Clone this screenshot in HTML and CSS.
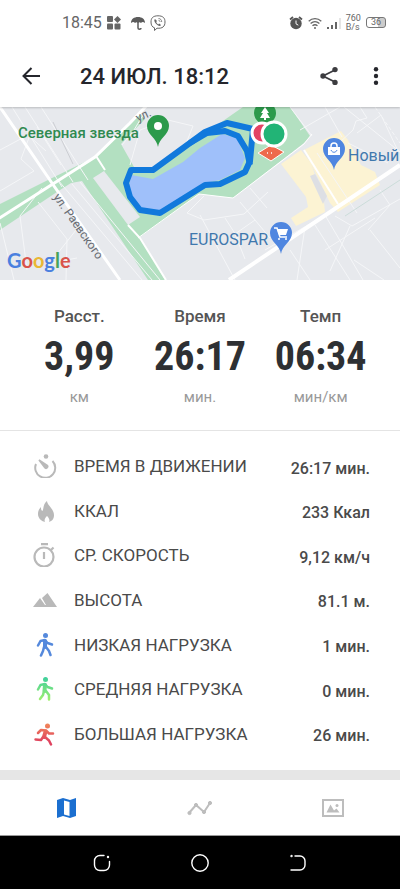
FILE: index.html
```html
<!DOCTYPE html>
<html lang="ru">
<head>
    <meta charset="UTF-8">
    <meta name="viewport" content="width=device-width, initial-scale=1.0">
    <title>Тренировка</title>
    <link rel="stylesheet" href="styles.css">
</head>
<body>
    <div class="status-bar">
        <div class="status-left">
            <span class="clock">18:45</span>
            <svg class="status-icon" viewBox="0 0 14 14" fill="#666">
                <rect x="0" y="0" width="6" height="6" rx="1"/>
                <path d="M10.500 0L14 3.500 10.500 7 7 3.500z"/>
                <rect x="0" y="7.500" width="6" height="6" rx="1"/>
                <rect x="7.500" y="7.500" width="6" height="6" rx="1"/>
            </svg>
            <svg class="status-icon umbrella" viewBox="0 0 14 14">
                <path d="M0 7C0 3 3 1 7 1s7 2 7 6c-2-1.500-3-1-4 0-1-1-2-1-3 0-1-1-2-1-3 0-1-1-2-1.500-4 0z" fill="#5c5c5c"/>
                <path d="M7 5v7c0 1.500 3 1.500 3 0" fill="none" stroke="#5c5c5c" stroke-width="1.500"/>
            </svg>
            <svg class="status-icon viber" viewBox="0 0 16 16" fill="none" stroke="#666">
                <path d="M8 .8C3 .8 1 3 1 7c0 3 1 5 3.500 5.800V15.500L7 13.200c5.500.5 8-1.700 8-6.200C15 3 13 .8 8 .8z"/>
                <path d="M5 4c-1.500 1-.5 3 1 4.700C7.500 10.300 10 12 11 10l-1.800-1.400-1 .8C7.500 9 6.500 8 6.200 7l.8-.9z" fill="#666" stroke="none"/>
                <path d="M8.500 3.500c2 0 3.200 1.500 3.200 3.500M8.500 5.300c1 0 1.500.7 1.500 1.700" stroke-width=".8"/>
            </svg>
        </div>
        <div class="status-right">
            <svg class="status-icon" viewBox="0 0 14 14">
                <path d="M1 3.500L4 1M13 3.500L10 1" stroke="#555" stroke-width="1.800"/>
                <circle cx="7" cy="7.500" r="5.700" fill="#555"/>
                <path d="M7 4.500v3.300l2.300 1.400" fill="none" stroke="#fff"/>
            </svg>
            <svg class="status-icon" viewBox="0 0 14 14" fill="none" stroke="#666" stroke-width="1.300">
                <path d="M.7 5.200c3.600-3.400 9-3.400 12.600 0M2.600 7.500c2.600-2.300 6.200-2.300 8.800 0M4.500 9.800c1.500-1.300 3.500-1.300 5 0"/>
                <circle cx="7" cy="12" r="1" fill="#666" stroke="none"/>
            </svg>
            <svg class="status-icon" viewBox="0 0 14 14">
                <path d="M0 11h2v2H0zM4 9h2v4H4zM8 6h2v7H8z" fill="#666"/>
                <path d="M12.500 2h1v11h-1z" fill="#ccc"/>
            </svg>
            <span class="speed">760<br>B/s</span>
            <span class="battery">36</span>
        </div>
    </div>

    <header class="header">
        <button class="icon-btn" aria-label="Назад">
            <svg viewBox="0 0 20 20" fill="none" stroke="#25262c" stroke-width="2">
                <path d="M19 10H2.500M10.500 2L2.500 10l8 8"/>
            </svg>
        </button>
        <h1 class="title">24 ИЮЛ. 18:12</h1>
        <button class="icon-btn" aria-label="Поделиться">
            <svg viewBox="0 0 20 20" fill="#3c3c40">
                <path d="M16 4L4 10l12 6" fill="none" stroke="#3c3c40" stroke-width="1.800"/>
                <circle cx="16" cy="3.600" r="2.700"/>
                <circle cx="4" cy="10" r="2.700"/>
                <circle cx="16" cy="16.400" r="2.700"/>
            </svg>
        </button>
        <button class="icon-btn" aria-label="Меню">
            <svg viewBox="0 0 20 20" fill="#25262c">
                <circle cx="10" cy="3.300" r="2.200"/>
                <circle cx="10" cy="10" r="2.200"/>
                <circle cx="10" cy="16.700" r="2.200"/>
            </svg>
        </button>
    </header>

    <main class="main">
        <div class="map">
            <svg class="map-svg" viewBox="0 107 400 173" preserveAspectRatio="xMidYMid slice">
                <rect x="0" y="107" width="400" height="173" fill="#e7e9ed"/>
                <!-- parks -->
                <path d="M0 204L50 179 95 157 140 114 145 119 121 144 134 167 158 168 200 137 243 107H290L310 136 304 143 233 198 199 194 140 237 165 280H148L82 181 71 183 60 190 0 230z" fill="#b3e0c1"/>
                <path d="M93 178l11-7 36 46-12 8z" fill="#e7e9ed"/>
                <!-- shops -->
                <g fill="#fcf3d3">
                    <path d="M281 164l20-14 10 13 13 39 1 10-29 14-5-8 17-11-2-10z"/>
                    <path d="M304 150l37-19 7 9 13 25 14 7 5 13-42 27-8-9-12-25z"/>
                </g>
                <path d="M310 176l5-2 12 22-4 8z" fill="#dddfe4"/>
                <!-- small streets -->
                <g fill="none" stroke="#f5f6f8" stroke-width="1">
                    <path d="M12 107l50 80M25 107l48 75M41 107l47 73M0 150l28-15 18 16M30 135l-9 24 13 12-34 20M37 127l24 38M58 180l84 100M72 184l80 96M80 182l80 98M0 223l14 57M42 188l-22 28 7 54M38 202l29 37-1 41M80 225l-30 38 27-5"/>
                    <path d="M122 145l12-15 9-15M130 165l10-35 28-10 25 6-10 25M204 196l-17 17 17 7 40-6 24-22M225 218l16 25M240 202l30 36M250 188l17 20M200 215l35 65M255 220l-20 14 10 25M265 250l60-35 38 65M315 225l35 55M290 250l20 30M335 216l17 10 48-27M350 226l-20 45M368 230l22-25-10-15M370 230l30 38M354 260l30 20M305 227l-8 53M325 250l50-32M317 153l40 60M323 158l30-28 3-9 11-3-7-11M325 107l17 30M300 130l40-23M290 107l22 29M348 143l40 20M357 133l24-18 17 36M344 107l56 45"/>
                    <path d="M375 107l25 36" stroke-dasharray="4 2"/>
                </g>
                <path d="M345 216l55-36" stroke="#cbdcd9" fill="none"/>
                <path d="M53 122l20 42" stroke="#ccced3" fill="none"/>
                <!-- main roads -->
                <g fill="none" stroke="#fff">
                    <path d="M-2 219L95 157 130 123 150 102" stroke-width="3"/>
                    <path d="M0 107L54 186 120 280" stroke-width="3"/>
                    <path d="M229 280L400 165" stroke-width="4"/>
                    <path d="M138 238L199 194 233 198 304 144 312 134" stroke-width="1"/>
                    <path d="M128 225l12 13 26 42M96 156l9 14" stroke-width="2"/>
                    <path d="M304 150l34 54" stroke-width="2"/>
                </g>
                <!-- lake and track -->
                <path d="M131 175l22 4 30-17 17-14 22-14 15 4 8 20-5 12-20 10-15 3-45 28-20-2-12-18z" fill="#9fc0fa"/>
                <path d="M253 129L227 123 205 132 153 170H131L126 183 130 197 140 210 160 213 205 185 220 184 245 172 250 161 253 129" fill="none" stroke="#1179dc" stroke-width="6" stroke-linejoin="round"/>
                <path d="M190 143l17-10 18-2 13 5 9 15 3 14" fill="none" stroke="#1179dc" stroke-width="6" stroke-linejoin="round"/>
                <path d="M258 153l13-8 13 7-13 9z" fill="#ee6a4c" stroke="#fff"/>
                <path d="M267 153h1M271 153h1" stroke="#fff" stroke-width="1.500"/>
                <circle cx="265" cy="113" r="11" fill="#2c9a4b"/>
                <path d="M265 107l-4 6h2l-3 5h4v2h2v-2h4l-3-5h2z" fill="#fff"/>
                <circle cx="262" cy="133" r="10" fill="#e34364" stroke="#fff" stroke-width="3"/>
                <circle cx="274" cy="134" r="12" fill="#22b476" stroke="#fff" stroke-width="3"/>
                <!-- pins -->
                <path d="M158 147c-1-9-11-12-11-21a11 11 0 0 1 22 0c0 9-10 12-11 21z" fill="#2c9a4b"/>
                <circle cx="158" cy="126" r="4" fill="#fff"/>
                <path d="M334 170c-1-9-11-12-11-21a11 11 0 0 1 22 0c0 9-10 12-11 21z" fill="#4f86e0"/>
                <path d="M328 147h12v8h-12z" fill="#fff"/>
                <path d="M331 147v-1a3 3 0 0 1 6 0v1" fill="none" stroke="#fff" stroke-width="1.500"/>
                <path d="M331 150c1 3 5 3 6 0" fill="none" stroke="#4f86e0"/>
                <path d="M281 254c-1-9-11-12-11-21a11 11 0 0 1 22 0c0 9-10 12-11 21z" fill="#4f86e0"/>
                <path d="M274 228h3l3 9h7" fill="none" stroke="#fff" stroke-width="1.500"/>
                <path d="M277 229h11l-2 6h-7z" fill="#fff"/>
                <circle cx="279" cy="239" r="1" fill="#fff"/>
                <circle cx="286" cy="239" r="1" fill="#fff"/>
                <!-- labels -->
                <text class="map-label green" x="18" y="138">Северная звезда</text>
                <text class="map-label blue" x="348" y="161">Новый</text>
                <text class="map-label blue" x="189" y="245">EUROSPAR</text>
                <text class="map-street" transform="translate(53 197) rotate(55)">ул. Раевского</text>
                <text class="map-street" transform="translate(138 122) rotate(-25)">ул.</text>
                <text class="map-logo" x="7" y="268"><tspan fill="#4a80df">G</tspan><tspan fill="#d9534a">o</tspan><tspan fill="#e9b735">o</tspan><tspan fill="#4a80df">g</tspan><tspan fill="#46a35b">l</tspan><tspan fill="#d9534a">e</tspan></text>
            </svg>
        </div>

        <section class="stats">
            <div class="stat">
                <div class="stat-name">Расст.</div>
                <div class="stat-value">3,99</div>
                <div class="stat-unit">км</div>
            </div>
            <div class="stat">
                <div class="stat-name">Время</div>
                <div class="stat-value">26:17</div>
                <div class="stat-unit">мин.</div>
            </div>
            <div class="stat">
                <div class="stat-name">Темп</div>
                <div class="stat-value">06:34</div>
                <div class="stat-unit">мин/км</div>
            </div>
        </section>

        <ul class="details">
            <li class="row">
                <svg class="row-icon" viewBox="0 0 24 24" fill="none" stroke="#b9b9b9" stroke-width="2">
                    <path d="M3 10a10 10 0 1 0 16.500-3"/>
                    <path d="M6 6l8.500 5.500a1.800 1.800 0 0 1-2.500 2.500z" fill="#b9b9b9" stroke-width="1.500"/>
                    <circle cx="13" cy="2.500" r="2.300" fill="#b9b9b9" stroke="none"/>
                </svg>
                <span class="row-name">ВРЕМЯ В ДВИЖЕНИИ</span>
                <span class="row-value">26:17 мин.</span>
            </li>
            <li class="row">
                <svg class="row-icon" viewBox="0 0 24 24" fill="#b9b9b9">
                    <path d="M14 2c0 4 7 8 7 14 0 4-2 6-5 7 1-2 0-4-2-6-2 2-3 4-2 6-4-1-7-4-7-8 0-3 1-5 3-7 0 2 0 3 1.500 4C11 9 10 5 14 2z"/>
                </svg>
                <span class="row-name">ККАЛ</span>
                <span class="row-value">233 Ккал</span>
            </li>
            <li class="row">
                <svg class="row-icon" viewBox="0 0 24 24" fill="none" stroke="#b9b9b9" stroke-width="2.200">
                    <circle cx="11" cy="14" r="9.500"/>
                    <path d="M8 1.200h7M11 9v7M18 7l2.500-2.500"/>
                </svg>
                <span class="row-name">СР. СКОРОСТЬ</span>
                <span class="row-value">9,12 км/ч</span>
            </li>
            <li class="row">
                <svg class="row-icon" viewBox="0 0 24 24" fill="#b9b9b9">
                    <path d="M0 19l7-9 5 7h1l-4-7 5.500-5L24 19z"/>
                </svg>
                <span class="row-name">ВЫСОТА</span>
                <span class="row-value">81.1 м.</span>
            </li>
            <li class="row">
                <svg class="row-icon" viewBox="0 0 24 24" fill="none" stroke="#5589dc" stroke-width="2.500" stroke-linecap="round" stroke-linejoin="round">
                    <circle cx="12.500" cy="2.500" r="2.500" fill="#5589dc" stroke="none"/>
                    <path d="M5 12.500L7.500 8 12 7l2.500 3 4.500 1.500"/>
                    <path d="M12 8v6" stroke-width="4"/>
                    <path d="M11 14l-1 4-2 4.500M13 14l3 4 1.500 4"/>
                </svg>
                <span class="row-name">НИЗКАЯ НАГРУЗКА</span>
                <span class="row-value">1 мин.</span>
            </li>
            <li class="row">
                <svg class="row-icon" viewBox="0 0 24 24" fill="none" stroke="url(#mid)" stroke-width="2.500" stroke-linecap="round" stroke-linejoin="round">
                    <defs>
                        <linearGradient id="mid" gradientUnits="userSpaceOnUse" x1="0" y1="0" x2="0" y2="24">
                            <stop offset="0" stop-color="#3ccf9d"/>
                            <stop offset="1" stop-color="#a2f06d"/>
                        </linearGradient>
                    </defs>
                    <circle cx="12.500" cy="2.500" r="2.500" fill="url(#mid)" stroke="none"/>
                    <path d="M5 12.500L7.500 8 12 7l2.500 3 4.500 1.500"/>
                    <path d="M12 8l-.5 6" stroke-width="4"/>
                    <path d="M11 14l-1 4-3 4M13 14l3 4 0 4.500"/>
                </svg>
                <span class="row-name">СРЕДНЯЯ НАГРУЗКА</span>
                <span class="row-value">0 мин.</span>
            </li>
            <li class="row">
                <svg class="row-icon" viewBox="0 0 24 24" fill="none" stroke="url(#high)" stroke-width="2.500" stroke-linecap="round" stroke-linejoin="round">
                    <defs>
                        <linearGradient id="high" gradientUnits="userSpaceOnUse" x1="0" y1="2" x2="0" y2="20">
                            <stop offset="0" stop-color="#f0855a"/>
                            <stop offset="1" stop-color="#df425f"/>
                        </linearGradient>
                    </defs>
                    <circle cx="14.500" cy="4" r="2.500" fill="url(#high)" stroke="none"/>
                    <path d="M5 11l3-3 5 .5 3 3h4"/>
                    <path d="M12.500 9.500L11 15" stroke-width="4"/>
                    <path d="M10 15l-2 3-5.500-.5M12 15l4 3.500 2 4"/>
                </svg>
                <span class="row-name">БОЛЬШАЯ НАГРУЗКА</span>
                <span class="row-value">26 мин.</span>
            </li>
        </ul>
    </main>

    <nav class="tabs">
        <button class="tab" aria-label="Карта">
            <svg viewBox="0 0 24 24" fill="#1b6fd0">
                <path fill-rule="evenodd" d="M2 4l6-2 7 2 6-2v18l-6 2-7-2-6 2zM9 4.500v14l5.500 1.500V6z"/>
            </svg>
        </button>
        <button class="tab" aria-label="График">
            <svg class="tab-chart" viewBox="0 0 26 24" fill="#bdbdbd" stroke="#bdbdbd">
                <path d="M2 17l7-8 8 7 6-9" fill="none" stroke-width="2"/>
                <circle cx="2.500" cy="17" r="1.600"/>
                <circle cx="9" cy="9" r="1.600"/>
                <circle cx="17" cy="16" r="1.600"/>
                <circle cx="23" cy="7" r="1.600"/>
            </svg>
        </button>
        <button class="tab" aria-label="Фото">
            <svg viewBox="0 0 24 24" fill="#bdbdbd">
                <path d="M2 4h20v16H2z" fill="none" stroke="#bdbdbd" stroke-width="2"/>
                <path d="M5.500 16.500L9.500 8.500l3.500 6 2.500-2 3 4z"/>
                <circle cx="16" cy="9.500" r="1.500"/>
            </svg>
        </button>
    </nav>

    <div class="system-nav">
        <button class="sys-btn" aria-label="Недавние">
            <svg viewBox="0 0 18 18" fill="none" stroke="#fff" stroke-width="1.400" stroke-linecap="round">
                <path d="M11 1.500H7A5.500 5.500 0 0 0 1.500 7v4A5.500 5.500 0 0 0 7 16.500h4A5.500 5.500 0 0 0 16.500 11V7.500"/>
                <circle cx="15" cy="3" r=".5"/>
            </svg>
        </button>
        <button class="sys-btn" aria-label="Домой">
            <svg viewBox="0 0 18 18" fill="none" stroke="#fff" stroke-width="1.400">
                <circle cx="9" cy="9" r="8.200"/>
            </svg>
        </button>
        <button class="sys-btn" aria-label="Назад">
            <svg viewBox="0 0 18 18" fill="none" stroke="#fff" stroke-width="1.400" stroke-linecap="round">
                <path d="M6 2h5a5 5 0 0 1 5 5v4a5 5 0 0 1-5 5H2"/>
                <circle cx="2.500" cy="2" r=".5"/>
            </svg>
        </button>
    </div>
</body>
</html>
```
FILE: styles.css
```css
* {
    margin: 0;
    padding: 0;
    box-sizing: border-box;
}

body {
    font-family: Roboto, 'Noto Sans', sans-serif;
    background: #fff;
    color: #4a4a4a;
    min-height: 100vh;
    display: flex;
    flex-direction: column;
}

button {
    background: none;
    border: none;
    cursor: pointer;
}

svg {
    display: block;
}

.status-bar {
    display: flex;
    justify-content: space-between;
    align-items: center;
    height: 45px;
    padding: 0 14px 0 62px;
    color: #666;
}

.status-left,
.status-right {
    display: flex;
    align-items: center;
    gap: 5px;
}

.clock {
    font-size: 16px;
}

.status-icon {
    width: 14px;
    height: 14px;
}

.umbrella {
    margin-left: 5px;
}

.viber {
    width: 16px;
    height: 16px;
}

.speed {
    font-size: 9px;
    line-height: 9px;
}

.battery {
    font-size: 9px;
    line-height: 9px;
    padding: 0 4px;
    border: 1px solid #777;
    border-radius: 3px;
    background: linear-gradient(90deg, #fff 60%, #ccc 60%);
}

.header {
    display: flex;
    align-items: center;
    height: 62px;
    padding: 0 14px 0 21px;
    box-shadow: 0 1px 2px rgba(0, 0, 0, 0.2);
    clip-path: inset(0 0 -3px 0);
    z-index: 1;
}

.icon-btn svg {
    width: 20px;
    height: 20px;
}

.icon-btn:last-child {
    margin-left: 27px;
}

.title {
    flex: 1;
    margin-left: 39px;
    font-size: 22px;
    font-weight: 500;
    color: #25262c;
}

.main {
    flex: 1;
    display: flex;
    flex-direction: column;
}

.map {
    height: 173px;
}

.map-svg {
    width: 100%;
    height: 100%;
}

.map-label {
    font-size: 16px;
}

.map-label.green {
    font-size: 15px;
    font-weight: 500;
    fill: #2f8a50;
}

.map-label.blue {
    fill: #3f78ad;
}

.map-street {
    font-size: 12px;
    fill: #666b72;
}

.map-logo {
    font-family: Lato, Roboto, sans-serif;
    font-size: 20px;
    font-weight: 700;
}

.stats {
    display: grid;
    grid-template-columns: repeat(3, 1fr);
    padding: 24px 19px 22px;
    border-bottom: 1px solid #e4e4e4;
    text-align: center;
}

.stat-name {
    font-size: 17px;
    line-height: 24px;
    font-weight: 500;
    color: #555;
}

.stat-value {
    font-family: 'Roboto Condensed', 'Liberation Sans Narrow', Roboto, sans-serif;
    font-size: 40px;
    line-height: 58px;
    font-weight: 700;
    color: #2e3033;
}

.stat-unit {
    font-size: 15px;
    line-height: 22px;
    color: #999;
}

.details {
    flex: 1;
    display: grid;
    grid-auto-rows: 1fr;
    padding: 13px 30px 14px 33px;
    list-style: none;
}

.row {
    display: flex;
    align-items: center;
    gap: 17px;
}

.row-icon {
    width: 24px;
    height: 24px;
}

.row-name {
    flex: 1;
    font-size: 17px;
}

.row-value {
    padding-top: 4px;
    font-size: 16px;
    font-weight: 500;
}

.tabs {
    display: grid;
    grid-template-columns: repeat(3, 1fr);
    height: 66px;
    border-top: 10px solid #e6e6e6;
    border-bottom: 1px solid #999;
}

.tab {
    display: flex;
    align-items: center;
    justify-content: center;
}

.tab svg {
    width: 24px;
    height: 24px;
}

.tab .tab-chart {
    width: 26px;
}

.system-nav {
    display: flex;
    justify-content: center;
    align-items: center;
    gap: 80px;
    height: 53px;
    background: #000;
}

.sys-btn svg {
    width: 18px;
    height: 18px;
}
```
